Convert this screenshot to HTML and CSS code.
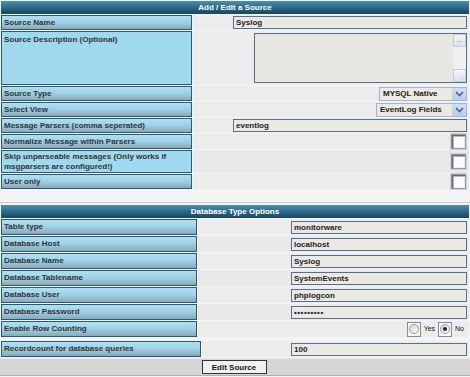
FILE: index.html
```html
<!DOCTYPE html>
<html>
<head>
<meta charset="utf-8">
<link rel="stylesheet" href="styles.css">
</head>
<body>
<table class="form t1">
  <tr><td class="hdr" colspan="2">Add / Edit a Source</td></tr>
  <tr><td class="lbl">Source Name</td><td class="val"><input class="txt w233" value="Syslog"></td></tr>
  <tr class="tall"><td class="lbl solid top">Source Description (Optional)</td>
    <td class="val"><div class="ta"><div class="sb"><span class="sbtn"><i class="dash"></i></span><span class="sbtn"><i class="grip"></i></span></div></div></td></tr>
  <tr><td class="lbl">Source Type</td><td class="val"><div class="sel w88"><span class="sv">MYSQL Native</span><span class="sa"><svg width="9" height="6" viewBox="0 0 9 6"><path d="M1 1 L4.5 4.5 L8 1" fill="none" stroke="#4d6185" stroke-width="1.6"/></svg></span></div></td></tr>
  <tr><td class="lbl">Select View</td><td class="val"><div class="sel w91"><span class="sv">EventLog Fields</span><span class="sa"><svg width="9" height="6" viewBox="0 0 9 6"><path d="M1 1 L4.5 4.5 L8 1" fill="none" stroke="#4d6185" stroke-width="1.6"/></svg></span></div></td></tr>
  <tr><td class="lbl">Message Parsers (comma seperated)</td><td class="val"><input class="txt w233" value="eventlog"></td></tr>
  <tr><td class="lbl">Normalize Message within Parsers</td><td class="val"><span class="cb"></span></td></tr>
  <tr class="two"><td class="lbl solid">Skip unparseable messages (Only works if msgparsers are configured!)</td><td class="val alt"><span class="cb"></span></td></tr>
  <tr><td class="lbl">User only</td><td class="val"><span class="cb"></span></td></tr>
</table>

<table class="form t2">
  <tr><td class="hdr" colspan="2">Database Type Options</td></tr>
  <tr><td class="lbl">Table type</td><td class="val"><input class="txt w175" value="monitorware"></td></tr>
  <tr><td class="lbl">Database Host</td><td class="val alt"><input class="txt w175" value="localhost"></td></tr>
  <tr><td class="lbl">Database Name</td><td class="val"><input class="txt w175" value="Syslog"></td></tr>
  <tr><td class="lbl">Database Tablename</td><td class="val alt"><input class="txt w175" value="SystemEvents"></td></tr>
  <tr><td class="lbl">Database User</td><td class="val"><input class="txt w175" value="phplogcon"></td></tr>
  <tr><td class="lbl">Database Password</td><td class="val alt"><input class="txt w175 pw" type="password" value="secretpw1"></td></tr>
  <tr><td class="lbl">Enable Row Counting</td><td class="val"><span class="rad"><span class="rb"><i class="ci"></i></span><span class="rt">Yes</span><span class="rb"><i class="ci on"></i></span><span class="rt">No</span></span></td></tr>
</table>

<table class="form t3">
  <tr><td class="lbl">Recordcount for database queries</td><td class="val"><input class="txt w175" value="100"></td></tr>
</table>

<div class="bar"><button class="btn">Edit Source</button></div>
</body>
</html>
```

FILE: styles.css
```css
* { box-sizing: border-box; }
body {
  margin: 0;
  background: #f4f4f4;
  font: bold 8px "Liberation Sans", Arial, sans-serif;
  color: #333;
}
.form {
  border-collapse: separate;
  border-spacing: 1px;
  width: 470px;
}
.form td {
  padding: 0 2px;
  height: 15px;
  line-height: 10px;
}
.t1 { margin-top: 0; }
.t1 .lbl { width: 191px; }
.t2 {
  margin-top: 12px;
  border-top: 1px solid #c9c9c9;
  padding-top: 1px;
}
.t2 .lbl { width: 196px; }
.t2 tr td { height: 16px; }
.t2 tr:first-child td { height: 13px; }
.t3 { margin-top: 2px; }
.t3 .lbl { width: 200px; }
.t3 td { height: 16px; }

.hdr {
  background: linear-gradient(#4a8fb3, #2b6684 55%, #1b4559);
  color: #fff;
  text-align: center;
  height: 13px !important;
  font-size: 8px;
  padding: 0;
}
.lbl {
  background: linear-gradient(#aee0f5, #9fcfe3 50%, #8aa9b9);
  border: 1px solid #2a5a70;
  color: #333;
  vertical-align: middle;
  white-space: nowrap;
}
.lbl.solid {
  background: #a0d8ee;
  white-space: normal;
}
.lbl.top { vertical-align: top; padding-top: 3px; }
.tall td { height: 54px; }
.two td { height: 23px; }

.val {
  background: #ececec;
  text-align: right;
  padding: 0 2px 0 0 !important;
  vertical-align: middle;
}
.val.alt { background: #e9e9e9; }

.txt {
  display: inline-block;
  vertical-align: middle;
  height: 13px;
  border: 1px solid #52728e;
  background: #ebe9e4;
  font: bold 8px "Liberation Sans", Arial, sans-serif;
  color: #222;
  padding: 0 2px;
  margin: 0;
  outline: none;
}
.w233 { width: 234px; }
.w175 { width: 176px; }
.pw { letter-spacing: 0.5px; }

.ta {
  display: inline-block;
  vertical-align: middle;
  width: 213px;
  height: 50px;
  border: 1px solid #52728e;
  background: #e9e7e2;
  position: relative;
}
.sb {
  position: absolute;
  right: 0;
  top: 0;
  bottom: 0;
  width: 13px;
  background: #f0f0ee;
  display: flex;
  flex-direction: column;
  justify-content: space-between;
}
.sbtn {
  display: block;
  width: 13px;
  height: 13px;
  background: linear-gradient(#f4f6fb, #d8e0ec);
  border: 1px solid #c4cbd6;
  position: relative;
}
.dash {
  position: absolute;
  left: 3px;
  top: 6px;
  width: 5px;
  height: 1px;
  background: #b7c3d4;
}
.grip {
  position: absolute;
  right: 2px;
  bottom: 2px;
  width: 3px;
  height: 3px;
  border-right: 1px solid #b7c3d4;
  transform: rotate(45deg);
}

.sel {
  display: inline-flex;
  vertical-align: middle;
  height: 14px;
  border: 1px solid #a3b5cf;
  background: #ebe9e4;
  text-align: left;
}
.w88 { width: 88px; }
.w91 { width: 91px; }
.sv {
  flex: 1;
  padding: 0 3px;
  line-height: 12px;
  color: #222;
}
.sa {
  width: 14px;
  background: linear-gradient(#d2defa, #b9cbf3);
  border-left: 1px solid #c8d6f4;
  display: flex;
  align-items: center;
  justify-content: center;
}

.cb {
  display: inline-block;
  vertical-align: middle;
  width: 15px;
  height: 15px;
  border: 1px solid #8a99a8;
  background: #fbfbf9;
  box-shadow: inset 1px 1px 0 #6b6b63, inset 2px 2px 0 #b8b8ae, inset -1px -1px 0 #eeeeea;
  outline: 1px solid #c9d1dc;
  margin-right: 1px;
}

.rad {
  display: inline-flex;
  align-items: center;
  vertical-align: middle;
  font-weight: normal;
  font-size: 7px;
  color: #111;
}
.rb {
  display: inline-flex;
  align-items: center;
  justify-content: center;
  width: 14px;
  height: 15px;
  border: 1px solid #7c8fa3;
  background: #f6f6f4;
}
.ci {
  display: block;
  width: 10px;
  height: 10px;
  border-radius: 50%;
  border: 1px solid #9a9a92;
  background: linear-gradient(135deg, #d4d4cc, #fff);
  position: relative;
}
.ci.on::after {
  content: "";
  position: absolute;
  left: 2px;
  top: 2px;
  width: 4px;
  height: 4px;
  border-radius: 50%;
  background: #222;
}
.rt { padding: 0 3px 0 3px; }

.bar {
  margin-top: 0;
  height: 18px;
  background: #d6d6d6;
  border-top: 1px solid #e6e6e6;
  border-bottom: 1px solid #b0b0b0;
  display: flex;
  justify-content: center;
  align-items: center;
  width: 470px;
}
.btn {
  width: 65px;
  height: 14px;
  padding: 0;
  border: 1px solid #333;
  background: #f1f1f1;
  font: bold 8px "Liberation Sans", Arial, sans-serif;
  color: #111;
  margin-left: -2px;
}
```
